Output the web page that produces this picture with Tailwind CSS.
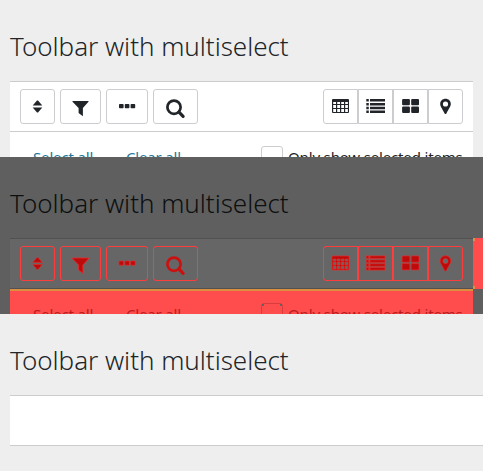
<!DOCTYPE html>
<html lang="en">
<head>
<meta charset="utf-8">
<title>Toolbar with multiselect</title>
<script src="https://cdn.jsdelivr.net/npm/@tailwindcss/browser@4"></script>
</head>
<body class="w-[483px] h-[471px] overflow-hidden bg-[#eee] font-['Noto_Sans','Open_Sans',sans-serif] text-[#212529]">
<svg class="hidden">
  <symbol id="sort" viewBox="0 0 35 35"><path d="M12.7 16.4 17 11.5H18L22.3 16.4ZM12.7 18.4H22.3L18 23.5H17Z"/></symbol>
  <symbol id="filter" viewBox="0 0 41 35"><path d="M12.5 12H28.5V12.8L22.9 19V27.3L18.6 24V19L12.5 12.8Z"/></symbol>
  <symbol id="dots" viewBox="0 0 42 35"><rect x="13" y="15" width="4.6" height="4.2" rx=".8"/><rect x="18.8" y="15" width="4.6" height="4.2" rx=".8"/><rect x="24.6" y="15" width="4.6" height="4.2" rx=".8"/></symbol>
  <symbol id="search" viewBox="0 0 45 35"><circle cx="21" cy="18.2" r="6.6" fill="none" stroke-width="2.7"/><path d="m26 23.2 4.1 4.1" stroke-width="3.2" stroke-linecap="round"/></symbol>
  <symbol id="table" viewBox="0 0 35 35"><path fill-rule="evenodd" d="M10 10H25Q26 10 26 11V23Q26 24 25 24H10Q9 24 9 23V11Q9 10 10 10ZM10.2 13V15H13V13ZM14.2 13V15H17V13ZM18.2 13V15H21V13ZM22.2 13V15H24.9V13ZM10.2 16.1V19H13V16.1ZM14.2 16.1V19H17V16.1ZM18.2 16.1V19H21V16.1ZM22.2 16.1V19H24.9V16.1ZM10.2 20V23H13V20ZM14.2 20V23H17V20ZM18.2 20V23H21V20ZM22.2 20V23H24.9V20Z"/></symbol>
  <symbol id="list" viewBox="0 0 35 35"><path d="M8.3 9.9h2.5v2.5h-2.5zM12 9.9h15v2.5h-15zM8.3 13.9h2.5v2.5h-2.5zM12 13.9h15v2.5h-15zM8.3 17.8h2.5v2.5h-2.5zM12 17.8h15v2.5h-15zM8.3 21.6h2.5v2.5h-2.5zM12 21.6h15v2.5h-15z"/></symbol>
  <symbol id="grid" viewBox="0 0 35 35"><rect x="9.1" y="9.9" width="7.8" height="6.3" rx="1"/><rect x="18.2" y="9.9" width="7.8" height="6.3" rx="1"/><rect x="9.1" y="17.6" width="7.8" height="6.3" rx="1"/><rect x="18.2" y="17.6" width="7.8" height="6.3" rx="1"/></symbol>
  <symbol id="pin" viewBox="0 0 35 35"><path fill-rule="evenodd" d="M17.5 9.8c3.1 0 5.3 2.2 5.3 5.1 0 2.3-1.5 3.6-4.4 9.6-.4.8-1.4.8-1.8 0-2.9-6-4.4-7.3-4.4-9.6 0-2.9 2.2-5.1 5.3-5.1zm0 2.6a2.6 2.6 0 1 0 0 5.2 2.6 2.6 0 0 0 0-5.2z"/></symbol>
</svg>

<section class="h-[157px] overflow-hidden px-[10px]">
  <h2 class="h-[81px] pt-[28px] text-[26px] leading-[36px] font-light tracking-[-0.03px] whitespace-nowrap">Toolbar with multiselect</h2>
  <div class="h-[51px] border-y border-[#ccc] bg-white px-[10px] pt-[7px] flex justify-between fill-[#212529] stroke-[#212529]">
    <div class="flex gap-[5px]">
      <button class="w-[35px] h-[35px] border border-[#cdcdd1] rounded-[3px]"><svg class="w-[35px] h-[35px] -m-px stroke-none"><use href="#sort"/></svg></button>
      <button class="w-[41px] h-[35px] border border-[#cdcdd1] rounded-[3px]"><svg class="w-[41px] h-[35px] -m-px stroke-none"><use href="#filter"/></svg></button>
      <button class="w-[42px] h-[35px] border border-[#cdcdd1] rounded-[3px]"><svg class="w-[42px] h-[35px] -m-px stroke-none"><use href="#dots"/></svg></button>
      <button class="w-[45px] h-[35px] border border-[#cdcdd1] rounded-[3px]"><svg class="w-[45px] h-[35px] -m-px"><use href="#search"/></svg></button>
    </div>
    <div class="flex stroke-none">
      <button class="w-[35px] h-[35px] border border-[#cdcdd1] rounded-l-[3px]"><svg class="w-[35px] h-[35px] -m-px"><use href="#table"/></svg></button>
      <button class="w-[35px] h-[35px] border border-[#cdcdd1]"><svg class="w-[35px] h-[35px] -m-px"><use href="#list"/></svg></button>
      <button class="w-[35px] h-[35px] border border-[#cdcdd1]"><svg class="w-[35px] h-[35px] -m-px"><use href="#grid"/></svg></button>
      <button class="w-[35px] h-[35px] border border-[#cdcdd1] rounded-r-[3px]"><svg class="w-[35px] h-[35px] -m-px"><use href="#pin"/></svg></button>
    </div>
  </div>
  <div class="h-[25px] overflow-hidden bg-white pl-[23px] pt-[14px] flex items-start text-[15px] leading-[22px] tracking-[-0.16px] whitespace-nowrap">
    <span class="w-[93px] text-[#20799c]">Select all</span>
    <span class="w-[135px] text-[#20799c]">Clear all</span>
    <span class="w-[22px] h-[22px] mr-[5px] shrink-0 border border-[#cdcdd1] rounded-[3px]"></span>
    <span>Only show selected items</span>
  </div>
</section>

<section class="relative h-[157px] overflow-hidden px-[10px] bg-[#5f5f5f]">
  <h2 class="h-[81px] pt-[28px] text-[26px] leading-[36px] font-light tracking-[-0.03px] whitespace-nowrap text-[#0d0f10]">Toolbar with multiselect</h2>
  <div class="h-[51px] border-y border-[#515151] bg-[#666] px-[10px] pt-[7px] flex justify-between fill-[#bd0b0b] stroke-[#ed2a2a]">
    <div class="flex gap-[5px]">
      <button class="w-[35px] h-[35px] border border-[#ff3d3d] rounded-[3px]"><svg class="w-[35px] h-[35px] -m-px stroke-[.6px]"><use href="#sort"/></svg></button>
      <button class="w-[41px] h-[35px] border border-[#ff3d3d] rounded-[3px]"><svg class="w-[41px] h-[35px] -m-px stroke-[.8px]"><use href="#filter"/></svg></button>
      <button class="w-[42px] h-[35px] border border-[#ff3d3d] rounded-[3px]"><svg class="w-[42px] h-[35px] -m-px stroke-[.7px]"><use href="#dots"/></svg></button>
      <button class="w-[45px] h-[35px] border border-[#ff3d3d] rounded-[3px]"><svg class="w-[45px] h-[35px] -m-px stroke-[#cc1010]"><use href="#search"/></svg></button>
    </div>
    <div class="flex stroke-[.7px]">
      <button class="w-[35px] h-[35px] border border-[#ff3d3d] rounded-l-[3px]"><svg class="w-[35px] h-[35px] -m-px"><use href="#table"/></svg></button>
      <button class="w-[35px] h-[35px] border border-[#ff3d3d]"><svg class="w-[35px] h-[35px] -m-px"><use href="#list"/></svg></button>
      <button class="w-[35px] h-[35px] border border-[#ff3d3d]"><svg class="w-[35px] h-[35px] -m-px"><use href="#grid"/></svg></button>
      <button class="w-[35px] h-[35px] border border-[#ff3d3d] rounded-r-[3px]"><svg class="w-[35px] h-[35px] -m-px"><use href="#pin"/></svg></button>
    </div>
  </div>
  <div class="h-[25px] overflow-hidden border-t-2 border-[#db8f40] bg-[#ff4c4c] pl-[23px] pt-[12px] flex items-start text-[15px] leading-[22px] tracking-[-0.16px] whitespace-nowrap text-[#b81c20]">
    <span class="w-[93px]">Select all</span>
    <span class="w-[135px]">Clear all</span>
    <span class="relative w-[22px] h-[22px] mr-[5px] shrink-0 border border-[#d93d3d] rounded-[3px]"><i class="absolute left-0 top-0 size-[2px] bg-[#66605f]"></i><i class="absolute right-0 top-0 size-[2px] bg-[#66605f]"></i></span>
    <span>Only show selected items</span>
  </div>
  <div class="absolute left-[473px] top-[81px] w-[10px] h-[51px] bg-[#ff4c4c] flex flex-col justify-between"><i class="block w-[2px] h-[3px] bg-[#db8f40]"></i><i class="block w-[2px] h-[3px] bg-[#db8f40]"></i></div>
</section>

<section class="h-[157px] overflow-hidden pl-[10px]">
  <h2 class="h-[81px] pt-[28px] text-[26px] leading-[36px] font-light tracking-[-0.03px] whitespace-nowrap">Toolbar with multiselect</h2>
  <div class="h-[51px] border-y border-[#ccc] bg-white"></div>
</section>
</body>
</html>
